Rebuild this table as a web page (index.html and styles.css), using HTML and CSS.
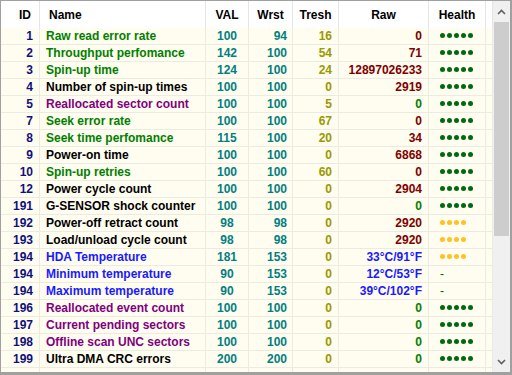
FILE: index.html
```html
<!DOCTYPE html>
<html lang="en">
<head>
    <meta charset="UTF-8">
    <title>S.M.A.R.T.</title>
    <link rel="stylesheet" href="styles.css">
</head>
<body>
    <div class="frame">
        <div class="grid" id="grid">
            <div class="row head">
                <div class="cell id">ID</div>
                <div class="cell name">Name</div>
                <div class="cell">VAL</div>
                <div class="cell">Wrst</div>
                <div class="cell">Tresh</div>
                <div class="cell">Raw</div>
                <div class="cell">Health</div>
                <div class="cell"></div>
            </div>
        </div>
        <div class="scrollbar">
            <div class="arrow">
                <svg width="9" height="6" viewBox="0 0 9 6"><polyline points="1,5 4.5,1.5 8,5" fill="none" stroke="#606060" stroke-width="1.6"/></svg>
            </div>
            <div class="thumb"></div>
            <div class="track"></div>
            <div class="arrow">
                <svg width="9" height="6" viewBox="0 0 9 6"><polyline points="1,1 4.5,4.5 8,1" fill="none" stroke="#606060" stroke-width="1.6"/></svg>
            </div>
        </div>
    </div>
    <script>
        // id, name, name colour, val, worst, tresh, raw, raw colour, health
        const attrs = [
            [1, 'Raw read error rate', 'ok', 100, 94, 16, '0', 'red', 5],
            [2, 'Throughput perfomance', 'ok', 142, 100, 54, '71', 'red', 5],
            [3, 'Spin-up time', 'ok', 124, 100, 24, '12897026233', 'red', 5],
            [4, 'Number of spin-up times', 'plain', 100, 100, 0, '2919', 'red', 5],
            [5, 'Reallocated sector count', 'crit', 100, 100, 5, '0', 'ok', 5],
            [7, 'Seek error rate', 'ok', 100, 100, 67, '0', 'red', 5],
            [8, 'Seek time perfomance', 'ok', 115, 100, 20, '34', 'red', 5],
            [9, 'Power-on time', 'plain', 100, 100, 0, '6868', 'red', 5],
            [10, 'Spin-up retries', 'ok', 100, 100, 60, '0', 'red', 5],
            [12, 'Power cycle count', 'plain', 100, 100, 0, '2904', 'red', 5],
            [191, 'G-SENSOR shock counter', 'plain', 100, 100, 0, '0', 'ok', 5],
            [192, 'Power-off retract count', 'plain', 98, 98, 0, '2920', 'red', 4],
            [193, 'Load/unload cycle count', 'plain', 98, 98, 0, '2920', 'red', 4],
            [194, 'HDA Temperature', 'temp', 181, 153, 0, '33°C/91°F', 'temp', 4],
            [194, 'Minimum temperature', 'temp', 90, 153, 0, '12°C/53°F', 'temp', 0],
            [194, 'Maximum temperature', 'temp', 90, 153, 0, '39°C/102°F', 'temp', 0],
            [196, 'Reallocated event count', 'crit', 100, 100, 0, '0', 'ok', 5],
            [197, 'Current pending sectors', 'crit', 100, 100, 0, '0', 'ok', 5],
            [198, 'Offline scan UNC sectors', 'crit', 100, 100, 0, '0', 'ok', 5],
            [199, 'Ultra DMA CRC errors', 'plain', 200, 200, 0, '0', 'ok', 5],
        ];

        function health(n) {
            if (n === 0) return '<span class="dash">-</span>';
            const cls = n === 5 ? 'dot good' : 'dot warn';
            return `<span class="dots">${`<i class="${cls}"></i>`.repeat(n)}</span>`;
        }

        const grid = document.getElementById('grid');
        attrs.forEach(([id, name, nameCls, val, wrst, tresh, raw, rawCls, h]) => {
            grid.innerHTML += `<div class="row">
                <div class="cell id">${id}</div>
                <div class="cell name ${nameCls}">${name}</div>
                <div class="cell val">${val}</div>
                <div class="cell wrst">${wrst}</div>
                <div class="cell tresh">${tresh}</div>
                <div class="cell raw ${rawCls}">${raw}</div>
                <div class="cell health">${health(h)}</div>
                <div class="cell"></div>
            </div>`;
        });
        // partly visible row at the bottom
        grid.innerHTML += '<div class="row">' + '<div class="cell"></div>'.repeat(8) + '</div>';
    </script>
</body>
</html>
```

FILE: styles.css
```css
body {
    margin: 0;
    font-family: "Liberation Sans", Arial, sans-serif;
    font-size: 12px;
    font-weight: bold;
    color: #000;
}
.frame {
    box-sizing: border-box;
    width: 512px;
    height: 375px;
    display: flex;
    border-top: 1px solid #a0a0a0;
    border-left: 1px solid #a0a0a0;
    border-right: 2px solid #a0a0a0;
    border-bottom: 3px solid #a0a0a0;
    overflow: hidden;
}
.grid {
    flex: 1;
    overflow: hidden;
    background-color: #fffcf0;
}
.row {
    display: grid;
    grid-template-columns: 39px 166px 43px 44px 46px 90px 57px 1fr;
    height: 17px;
}
.cell {
    box-sizing: border-box;
    border-right: 1px solid #ecebe2;
    border-bottom: 1px solid #ecebe2;
    line-height: 16px;
    white-space: nowrap;
    overflow: hidden;
    text-align: right;
}
/* Header */
.head {
    height: 27px;
    background-color: #fff;
}
.head .cell {
    border-right-color: #e5e5e5;
    border-bottom: none;
    line-height: 28px;
    text-align: center;
}
.head .cell.id {
    text-align: right;
    padding-right: 8px;
    color: #000;
}
.head .cell.name {
    text-align: left;
    padding-left: 9px;
    color: #000;
}
/* Body columns */
.id {
    color: #10107e;
    padding-right: 6px;
}
.name {
    text-align: left;
    padding-left: 6px;
}
.val {
    text-align: center;
    color: #008080;
}
.wrst {
    color: #008080;
    padding-right: 5px;
}
.tresh {
    color: #999900;
    padding-right: 6px;
}
.raw {
    padding-right: 6px;
}
.health {
    text-align: left;
    padding-left: 11px;
}
/* Text colours */
.ok { color: #008000; }
.plain { color: #000; }
.crit { color: #800080; }
.temp { color: #1a1aff; }
.red { color: #800000; }
.dots {
    display: inline-flex;
    gap: 2px;
    vertical-align: middle;
    margin-top: -2px;
}
.dot {
    width: 5px;
    height: 5px;
    border-radius: 50%;
}
.dot.good { background-color: #006a10; }
.dot.warn { background-color: #ffc125; }
.dash {
    color: #006400;
    font-weight: normal;
}
/* Scrollbar */
.scrollbar {
    width: 17px;
    display: flex;
    flex-direction: column;
    background-color: #f0f0f0;
}
.arrow {
    height: 21px;
    display: flex;
    align-items: center;
    justify-content: center;
}
.thumb {
    height: 214px;
    margin: 0 1px;
    background-color: #cdcdcd;
}
.track {
    flex: 1;
}
```
